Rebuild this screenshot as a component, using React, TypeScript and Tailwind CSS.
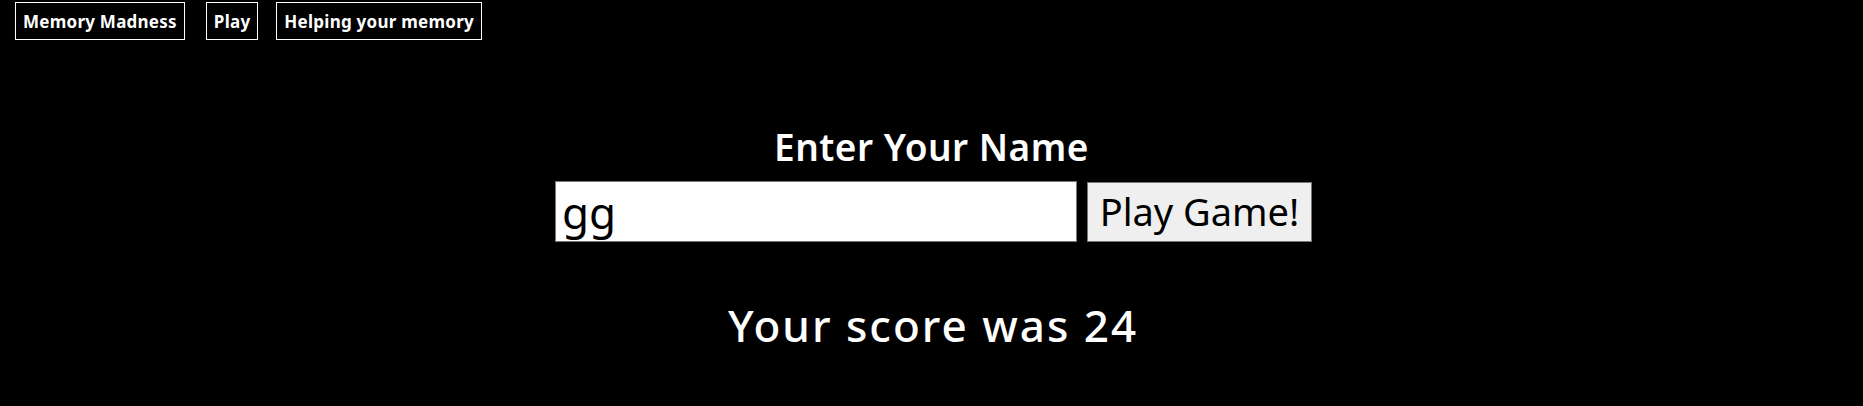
import { useState } from 'react';

const links = ['Memory Madness', 'Play', 'Helping your memory'];

const App = () => {
  const [name, setName] = useState('gg');

  return (
    <div className="min-h-screen w-full bg-black text-white" style={{ fontFamily: "'Noto Sans', sans-serif" }}>
      {/* top nav */}
      <nav className="flex items-start pt-[2px] pl-[15px]">
        {links.map((label, i) => (
          <a
            key={label}
            href="#"
            className={`flex h-[38px] items-center border border-white px-[7px] text-[17px] font-bold leading-none tracking-[0.25px] text-white ${i === 0 ? '' : i === 1 ? 'ml-[21px]' : 'ml-[18px]'}`}
          >
            {label}
          </a>
        ))}
      </nav>

      <main className="flex flex-col items-center">
        <h2 className="mt-[85px] text-[37px] font-semibold leading-[44px] tracking-[0.5px]">Enter Your Name</h2>

        <div className="mt-[12px] ml-[4px] flex items-center gap-[10px]">
          <input
            value={name}
            onChange={(e) => setName(e.target.value)}
            className="h-[61px] w-[522px] border border-[#767676] bg-white px-[6px] text-[44px] text-black outline-none"
          />
          <button className="h-[60px] w-[225px] border border-[#767676] bg-[#efefef] text-[38px] text-black">
            Play Game!
          </button>
        </div>

        <h2 className="mt-[57px] ml-[3px] text-[44px] font-medium leading-[52px] tracking-[2px]">Your score was 24</h2>
      </main>
    </div>
  );
};

export default App;
